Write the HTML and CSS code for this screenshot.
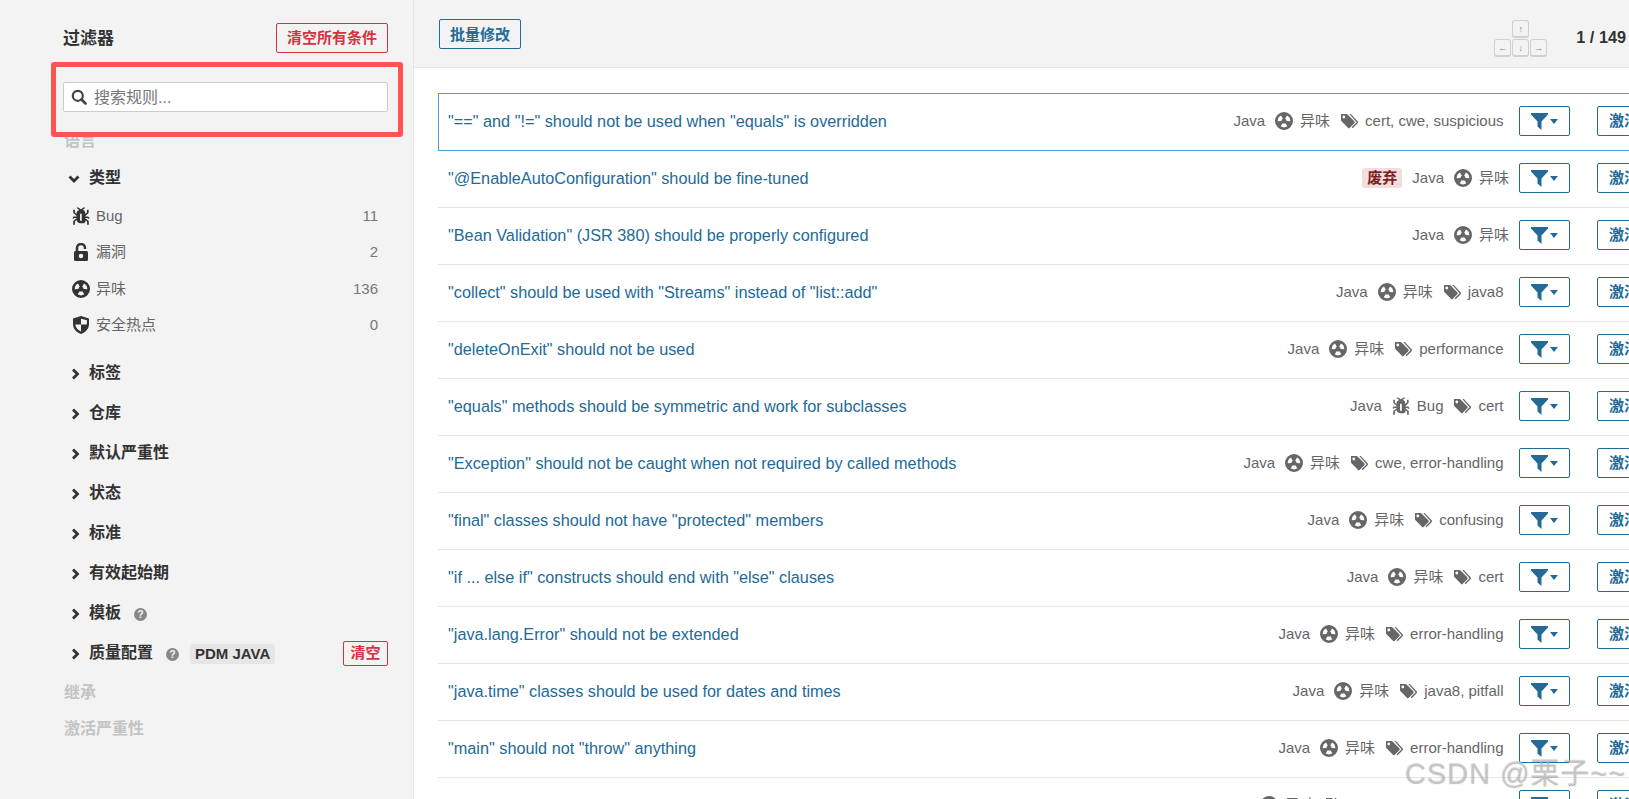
FILE: index.html
```html
<!DOCTYPE html>
<html lang="zh">
<head>
<meta charset="utf-8">
<title>规则</title>
<link rel="stylesheet" href="styles.css">
</head>
<body>
<svg class="defs" width="0" height="0" aria-hidden="true">
  <symbol id="i-smell" viewBox="1 1 14 14"><path fill-rule="evenodd" d="M8 1a7 7 0 1 0 0 14 7 7 0 1 0 0-14zM10.3 3.67A4.900 4.900 0 0 1 12.900 8.170L10 8.070A2 2 0 0 0 8.940 6.230ZM5.700 3.670L7.060 6.230A2 2 0 0 0 6 8.070L3.100 8.170A4.900 4.900 0 0 1 5.700 3.670ZM10.600 12.160A4.900 4.900 0 0 1 5.400 12.160L6.940 9.700A2 2 0 0 0 9.060 9.700Z"/></symbol>
  <symbol id="i-bug" viewBox="3.300 1 10.500 13.200" preserveAspectRatio="none"><path fill-rule="evenodd" d="M11 9h1.300l.5.800.8-.5-.8-1.300H11v-.3l2-2.300V3h-1v2l-1 1.200V5c-.1-.8-.7-1.500-1.400-1.900L11 1.800l-.7-.7-1.800 1.600-1.800-1.600-.7.700 1.500 1.400C6.700 3.600 6.100 4.200 6 5v1.100L5 5V3H4v2.300l2 2.300V8H4.200l-.7 1.200.8.500.4-.7H6v.3l-2 1.900V14h1v-2.400l1-1C6 12 7.100 13.100 8.400 13h.8c.7 0 1.400-.3 1.800-.9.3-.4.3-.9.2-1.400l.9.900V14h1v-2.800l-2-1.900V9zm-2 2H8V6h1v5z"/></symbol>
  <symbol id="i-lock" viewBox="0 0 14 18"><path fill-rule="evenodd" d="M1.500 8H12.500A1.500 1.500 0 0 1 14 9.500V16.500A1.500 1.500 0 0 1 12.500 18H1.500A1.500 1.500 0 0 1 0 16.500V9.500A1.500 1.500 0 0 1 1.500 8zM7 10.800a2.200 2.200 0 1 0 0 4.400 2.200 2.200 0 1 0 0-4.400z"/><path d="M3 9V5a4 4 0 0 1 8 0v1" fill="none" stroke="currentColor" stroke-width="2.500"/></symbol>
  <symbol id="i-shield" viewBox="0 0 16 18"><path fill-rule="evenodd" d="M8 0L16 2.600V8c0 5-3.500 8.500-8 10C3.500 16.500 0 13 0 8V2.600zM8 2.700V8.500H2.300C2.700 11.500 5 14.300 8 15.600V8.500H13.700C13.900 7.500 14 6.500 14 4.200z"/></symbol>
  <symbol id="i-tag" viewBox="0 0 18 16"><path fill-rule="evenodd" d="M1 1h5.500a1.500 1.500 0 0 1 1 .5L14.300 8.300a1.300 1.300 0 0 1 0 1.900L9.800 14.700a1.300 1.300 0 0 1-1.900 0L1.300 7.900A1.500 1.500 0 0 1 1 7zM3.800 2.600a1.400 1.400 0 1 0 0 2.800 1.400 1.400 0 1 0 0-2.800z"/><path d="M9.300 1h1.500l6.800 7.300a1.400 1.400 0 0 1 0 1.900l-5 5.100-1-1 5-5.100z"/></symbol>
  <symbol id="i-filter" viewBox="0 0 17 17"><path d="M0 0H17V1.500L10.500 8.500V17L6.500 13.500V8.500L0 1.500z"/></symbol>
  <symbol id="i-chev" viewBox="0 0 8 12"><path d="M1.500 1.500L6 6L1.500 10.500" fill="none" stroke="currentColor" stroke-width="2.800"/></symbol>
</svg>

<aside class="sidebar">
  <div class="side-head">
    <h1 class="side-title">过滤器</h1>
    <button class="btn-red btn-clear-all">清空所有条件</button>
  </div>
  <label class="search">
    <svg class="search-icon" viewBox="0 0 16 16"><circle cx="6.800" cy="6.800" r="5" fill="none" stroke="currentColor" stroke-width="2.200"/><path d="M10.500 10.500L14.500 14.500" stroke="currentColor" stroke-width="2.600" stroke-linecap="round"/></svg>
    <span class="search-ph">搜索规则...</span>
  </label>
  <div class="muted muted-lang">语言</div>
  <div class="facet facet-open">
    <svg class="chev-down" viewBox="0 0 12 8"><path d="M1.500 1.500L6 6L10.500 1.500" fill="none" stroke="currentColor" stroke-width="2.800"/></svg>
    <span>类型</span>
  </div>
  <ul class="types">
    <li class="type"><svg class="type-icon"><use href="#i-bug"/></svg><span class="type-name">Bug</span><span class="count">11</span></li>
    <li class="type"><svg class="type-icon"><use href="#i-lock"/></svg><span class="type-name">漏洞</span><span class="count">2</span></li>
    <li class="type"><svg class="type-icon"><use href="#i-smell"/></svg><span class="type-name">异味</span><span class="count">136</span></li>
    <li class="type"><svg class="type-icon"><use href="#i-shield"/></svg><span class="type-name">安全热点</span><span class="count">0</span></li>
  </ul>
  <div class="facets">
    <div class="facet"><svg class="chev"><use href="#i-chev"/></svg><span>标签</span></div>
    <div class="facet"><svg class="chev"><use href="#i-chev"/></svg><span>仓库</span></div>
    <div class="facet"><svg class="chev"><use href="#i-chev"/></svg><span>默认严重性</span></div>
    <div class="facet"><svg class="chev"><use href="#i-chev"/></svg><span>状态</span></div>
    <div class="facet"><svg class="chev"><use href="#i-chev"/></svg><span>标准</span></div>
    <div class="facet"><svg class="chev"><use href="#i-chev"/></svg><span>有效起始期</span></div>
    <div class="facet"><svg class="chev"><use href="#i-chev"/></svg><span>模板</span><span class="help">?</span></div>
    <div class="facet"><svg class="chev"><use href="#i-chev"/></svg><span>质量配置</span><span class="help">?</span><span class="profile">PDM JAVA</span><button class="btn-red btn-clear">清空</button></div>
  </div>
  <div class="muted muted-inherit">继承</div>
  <div class="muted">激活严重性</div>
  <div class="highlight"></div>
</aside>

<main class="main">
  <header class="top">
    <button class="btn-bulk">批量修改</button>
    <div class="keys">
      <span class="key key-up">↑</span>
      <span class="key key-left">←</span>
      <span class="key key-down">↓</span>
      <span class="key key-right">→</span>
    </div>
    <div class="paging">1 / 149</div>
  </header>
  <ul class="rules">
    <li class="rule rule-selected"><a class="rule-title">"==" and "!=" should not be used when "equals" is overridden</a><div class="meta"><span>Java</span><span class="kind"><svg class="m-icon"><use href="#i-smell"/></svg>异味</span><span class="tags"><svg class="m-icon"><use href="#i-tag"/></svg>cert, cwe, suspicious</span></div><button class="btn-filter"><svg class="funnel"><use href="#i-filter"/></svg><i class="caret"></i></button><button class="btn-act">激活</button></li>
    <li class="rule"><a class="rule-title">"@EnableAutoConfiguration" should be fine-tuned</a><div class="meta"><span class="dep">废弃</span><span>Java</span><span class="kind"><svg class="m-icon"><use href="#i-smell"/></svg>异味</span></div><button class="btn-filter"><svg class="funnel"><use href="#i-filter"/></svg><i class="caret"></i></button><button class="btn-act">激活</button></li>
    <li class="rule"><a class="rule-title">"Bean Validation" (JSR 380) should be properly configured</a><div class="meta"><span>Java</span><span class="kind"><svg class="m-icon"><use href="#i-smell"/></svg>异味</span></div><button class="btn-filter"><svg class="funnel"><use href="#i-filter"/></svg><i class="caret"></i></button><button class="btn-act">激活</button></li>
    <li class="rule"><a class="rule-title">"collect" should be used with "Streams" instead of "list::add"</a><div class="meta"><span>Java</span><span class="kind"><svg class="m-icon"><use href="#i-smell"/></svg>异味</span><span class="tags"><svg class="m-icon"><use href="#i-tag"/></svg>java8</span></div><button class="btn-filter"><svg class="funnel"><use href="#i-filter"/></svg><i class="caret"></i></button><button class="btn-act">激活</button></li>
    <li class="rule"><a class="rule-title">"deleteOnExit" should not be used</a><div class="meta"><span>Java</span><span class="kind"><svg class="m-icon"><use href="#i-smell"/></svg>异味</span><span class="tags"><svg class="m-icon"><use href="#i-tag"/></svg>performance</span></div><button class="btn-filter"><svg class="funnel"><use href="#i-filter"/></svg><i class="caret"></i></button><button class="btn-act">激活</button></li>
    <li class="rule"><a class="rule-title">"equals" methods should be symmetric and work for subclasses</a><div class="meta"><span>Java</span><span class="kind"><svg class="m-icon"><use href="#i-bug"/></svg>Bug</span><span class="tags"><svg class="m-icon"><use href="#i-tag"/></svg>cert</span></div><button class="btn-filter"><svg class="funnel"><use href="#i-filter"/></svg><i class="caret"></i></button><button class="btn-act">激活</button></li>
    <li class="rule"><a class="rule-title">"Exception" should not be caught when not required by called methods</a><div class="meta"><span>Java</span><span class="kind"><svg class="m-icon"><use href="#i-smell"/></svg>异味</span><span class="tags"><svg class="m-icon"><use href="#i-tag"/></svg>cwe, error-handling</span></div><button class="btn-filter"><svg class="funnel"><use href="#i-filter"/></svg><i class="caret"></i></button><button class="btn-act">激活</button></li>
    <li class="rule"><a class="rule-title">"final" classes should not have "protected" members</a><div class="meta"><span>Java</span><span class="kind"><svg class="m-icon"><use href="#i-smell"/></svg>异味</span><span class="tags"><svg class="m-icon"><use href="#i-tag"/></svg>confusing</span></div><button class="btn-filter"><svg class="funnel"><use href="#i-filter"/></svg><i class="caret"></i></button><button class="btn-act">激活</button></li>
    <li class="rule"><a class="rule-title">"if ... else if" constructs should end with "else" clauses</a><div class="meta"><span>Java</span><span class="kind"><svg class="m-icon"><use href="#i-smell"/></svg>异味</span><span class="tags"><svg class="m-icon"><use href="#i-tag"/></svg>cert</span></div><button class="btn-filter"><svg class="funnel"><use href="#i-filter"/></svg><i class="caret"></i></button><button class="btn-act">激活</button></li>
    <li class="rule"><a class="rule-title">"java.lang.Error" should not be extended</a><div class="meta"><span>Java</span><span class="kind"><svg class="m-icon"><use href="#i-smell"/></svg>异味</span><span class="tags"><svg class="m-icon"><use href="#i-tag"/></svg>error-handling</span></div><button class="btn-filter"><svg class="funnel"><use href="#i-filter"/></svg><i class="caret"></i></button><button class="btn-act">激活</button></li>
    <li class="rule"><a class="rule-title">"java.time" classes should be used for dates and times</a><div class="meta"><span>Java</span><span class="kind"><svg class="m-icon"><use href="#i-smell"/></svg>异味</span><span class="tags"><svg class="m-icon"><use href="#i-tag"/></svg>java8, pitfall</span></div><button class="btn-filter"><svg class="funnel"><use href="#i-filter"/></svg><i class="caret"></i></button><button class="btn-act">激活</button></li>
    <li class="rule"><a class="rule-title">"main" should not "throw" anything</a><div class="meta"><span>Java</span><span class="kind"><svg class="m-icon"><use href="#i-smell"/></svg>异味</span><span class="tags"><svg class="m-icon"><use href="#i-tag"/></svg>error-handling</span></div><button class="btn-filter"><svg class="funnel"><use href="#i-filter"/></svg><i class="caret"></i></button><button class="btn-act">激活</button></li>
    <li class="rule"><a class="rule-title"></a><div class="meta"><span>Java</span><span class="kind"><svg class="m-icon"><use href="#i-smell"/></svg>异味</span><span class="tags"><svg class="m-icon"><use href="#i-tag"/></svg>error-handling, security</span></div><button class="btn-filter"><svg class="funnel"><use href="#i-filter"/></svg><i class="caret"></i></button><button class="btn-act">激活</button></li>
  </ul>
  <div class="watermark">CSDN @栗子~~</div>
</main>
</body>
</html>
```
FILE: styles.css
```css
* { box-sizing: border-box; }
html, body { margin: 0; height: 100%; }
body {
  display: flex;
  height: 100vh;
  overflow: hidden;
  background: #fff;
  color: #333;
  font-family: "Liberation Sans", "Noto Sans CJK SC", sans-serif;
  font-size: 15px;
  line-height: 20px;
}
ul { list-style: none; margin: 0; padding: 0; }
button { font-family: inherit; line-height: 20px; background: transparent; cursor: pointer; padding: 0; }
.defs { position: absolute; }

/* sidebar */
.sidebar {
  position: relative;
  flex: 0 0 414px;
  padding: 23px 25px 0 63px;
  background: #f3f3f3;
  border-right: 1px solid #e6e6e6;
}
.side-head { display: flex; justify-content: space-between; align-items: center; height: 29px; }
.side-title { margin: 0; padding-top: 2px; font-size: 17px; line-height: 20px; font-weight: 700; color: #333; }
.btn-red {
  border: 1px solid #d4333f;
  border-radius: 2px;
  color: #d4333f;
  font-weight: 700;
}
.btn-clear-all { width: 112px; height: 30px; font-size: 15px; }
.search {
  display: flex;
  align-items: center;
  height: 30px;
  margin-top: 30px;
  padding-left: 7px;
  gap: 7px;
  background: #fff;
  border: 1px solid #ccc;
  border-radius: 2px;
}
.search-icon { width: 16px; height: 16px; color: #444; flex: none; }
.search-ph { padding-top: 1px; font-size: 16px; color: #777; }
.muted {
  display: flex;
  align-items: center;
  height: 36px;
  padding-left: 1px;
  font-size: 16px;
  font-weight: 700;
  color: #c4c4c4;
}
.muted-lang { margin-top: 11px; }
.muted-inherit { margin-top: 2px; }
.facet {
  display: flex;
  align-items: center;
  height: 40px;
  font-size: 16px;
  font-weight: 700;
  color: #333;
}
.facet-open { height: 36px; margin-top: 1px; }
.chev { width: 9px; height: 12px; margin: 2px 9px 0 8px; color: #333; flex: none; }
.chev-down { width: 12px; height: 8px; margin: 1px 9px 0 5px; color: #333; flex: none; }
.types { padding-top: 2px; }
.type { display: flex; align-items: center; height: 36.300px; padding: 0 10px 0 9px; color: #666; font-size: 15px; }
.type-icon { width: 18px; height: 18px; flex: none; fill: #333; color: #333; }
.type-name { margin-left: 6px; }
.count { margin-left: auto; color: #777; }
.facets { margin-top: 10px; }
.help {
  display: inline-flex;
  align-items: center;
  justify-content: center;
  width: 13px;
  height: 13px;
  margin: 2px 0 0 13px;
  border-radius: 50%;
  background: #888;
  color: #f3f3f3;
  font-size: 10.500px;
  line-height: 13px;
  font-weight: 700;
}
.profile {
  margin: 2px 0 0 11px;
  padding: 0 5px;
  height: 20px;
  line-height: 20px;
  background: #e6e6e6;
  border-radius: 3px;
  font-size: 15px;
  white-space: nowrap;
}
.btn-clear { margin-left: auto; width: 45px; height: 25px; font-size: 15px; }
.highlight {
  position: absolute;
  left: 51px;
  top: 62px;
  width: 352px;
  height: 75px;
  border: 5px solid #ff5552;
  border-radius: 3px;
}

/* main */
.main { position: relative; flex: 1; min-width: 0; overflow: hidden; }
.top {
  display: flex;
  align-items: center;
  height: 68px;
  padding: 0 3px 0 25px;
  background: #f3f3f3;
  border-bottom: 1px solid #e6e6e6;
}
.btn-bulk {
  width: 82px;
  height: 30px;
  padding-top: 2px;
  border: 1px solid #236a97;
  border-radius: 2px;
  color: #236a97;
  font-size: 15px;
  font-weight: 700;
}
.keys {
  display: grid;
  grid-template-columns: repeat(3, 17px);
  grid-auto-rows: 18px;
  gap: 1px;
  margin: 0 29px 0 auto;
  padding-top: 10px;
}
.key {
  display: flex;
  align-items: center;
  justify-content: center;
  background: #f3f3f3;
  border: 1px solid #d0d0d0;
  border-bottom-width: 2px;
  border-radius: 3px;
  color: #888;
  font-size: 9px;
}
.key-up { grid-column: 2; grid-row: 1; }
.key-left { grid-column: 1; grid-row: 2; }
.key-down { grid-column: 2; grid-row: 2; }
.key-right { grid-column: 3; grid-row: 2; }
.paging { padding-top: 6px; font-size: 16.250px; font-weight: 700; color: #333; white-space: nowrap; }
.rules { width: 1252px; margin: 25px 0 0 24px; }
.rule {
  display: flex;
  align-items: center;
  height: 57px;
  padding: 0 1px 2px 10px;
  border-bottom: 1px solid #e6e6e6;
  font-size: 15px;
}
.rule-selected { height: 58px; padding: 0 0 2px 9px; border: 1px solid #4b9fd5; }
.rule-title { color: #236a97; font-size: 16.250px; white-space: nowrap; }
.meta { display: flex; align-items: center; gap: 10px; margin-left: auto; padding-right: 10px; color: #666; white-space: nowrap; }
.kind, .tags { display: flex; align-items: center; gap: 7px; }
.tags { margin-right: 5.500px; }
.m-icon { width: 18px; height: 18px; flex: none; fill: #666; color: #666; }
.dep {
  padding: 0 5px;
  height: 20px;
  line-height: 20px;
  background: #f4dddd;
  border-radius: 3px;
  color: #801f1f;
  font-weight: 700;
}
.btn-filter {
  display: flex;
  align-items: center;
  justify-content: center;
  gap: 2px;
  width: 51px;
  height: 30px;
  flex: none;
  border: 1px solid #236a97;
  border-radius: 2px;
  background: #fff;
}
.funnel { width: 17px; height: 17px; fill: #236a97; }
.caret {
  width: 0;
  height: 0;
  border-left: 4px solid transparent;
  border-right: 4px solid transparent;
  border-top: 5px solid #236a97;
}
.btn-act {
  width: 70px;
  height: 30px;
  flex: none;
  margin-left: 27px;
  margin-right: 22px;
  padding-left: 11px;
  text-align: left;
  border: 1px solid #236a97;
  border-radius: 2px;
  background: #fff;
  color: #236a97;
  font-size: 15px;
  font-weight: 700;
}
.watermark {
  position: absolute;
  right: 3px;
  top: 753px;
  line-height: 40px;
  letter-spacing: 1px;
  white-space: nowrap;
  font-size: 29px;
  color: rgba(200, 200, 200, 0.55);
  text-shadow: 0.5px 0.5px 1px rgba(110, 110, 110, 0.45);
}
```
